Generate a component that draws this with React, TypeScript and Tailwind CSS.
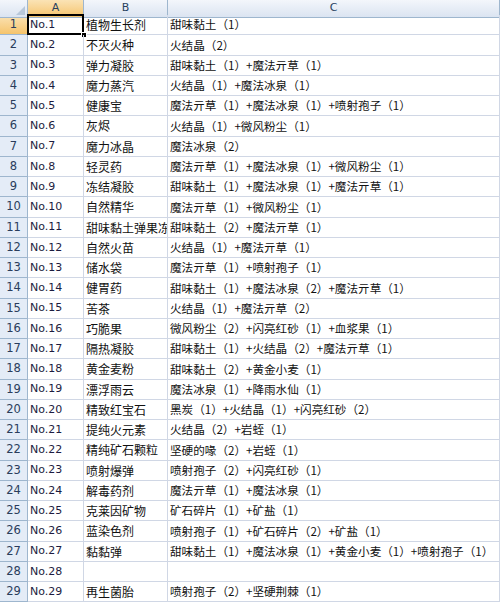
import React from 'react';

type Row = { a: string; b: string; c: string };

const rows: Row[] = [
  { a: 'No.1', b: '植物生长剂', c: '甜味黏土（1）' },
  { a: 'No.2', b: '不灭火种', c: '火结晶（2）' },
  { a: 'No.3', b: '弹力凝胶', c: '甜味黏土（1）+魔法亓草（1）' },
  { a: 'No.4', b: '魔力蒸汽', c: '火结晶（1）+魔法冰泉（1）' },
  { a: 'No.5', b: '健康宝', c: '魔法亓草（1）+魔法冰泉（1）+喷射孢子（1）' },
  { a: 'No.6', b: '灰烬', c: '火结晶（1）+微风粉尘（1）' },
  { a: 'No.7', b: '魔力冰晶', c: '魔法冰泉（2）' },
  { a: 'No.8', b: '轻灵药', c: '魔法亓草（1）+魔法冰泉（1）+微风粉尘（1）' },
  { a: 'No.9', b: '冻结凝胶', c: '甜味黏土（1）+魔法冰泉（1）+魔法亓草（1）' },
  { a: 'No.10', b: '自然精华', c: '魔法亓草（1）+微风粉尘（1）' },
  { a: 'No.11', b: '甜味黏土弹果冻', c: '甜味黏土（2）+魔法亓草（1）' },
  { a: 'No.12', b: '自然火苗', c: '火结晶（1）+魔法亓草（1）' },
  { a: 'No.13', b: '储水袋', c: '魔法亓草（1）+喷射孢子（1）' },
  { a: 'No.14', b: '健胃药', c: '甜味黏土（1）+魔法冰泉（2）+魔法亓草（1）' },
  { a: 'No.15', b: '苦茶', c: '火结晶（1）+魔法亓草（2）' },
  { a: 'No.16', b: '巧脆果', c: '微风粉尘（2）+闪亮红砂（1）+血浆果（1）' },
  { a: 'No.17', b: '隔热凝胶', c: '甜味黏土（1）+火结晶（2）+魔法亓草（1）' },
  { a: 'No.18', b: '黄金麦粉', c: '甜味黏土（2）+黄金小麦（1）' },
  { a: 'No.19', b: '漂浮雨云', c: '魔法冰泉（1）+降雨水仙（1）' },
  { a: 'No.20', b: '精致红宝石', c: '黑炭（1）+火结晶（1）+闪亮红砂（2）' },
  { a: 'No.21', b: '提纯火元素', c: '火结晶（2）+岩蛭（1）' },
  { a: 'No.22', b: '精纯矿石颗粒', c: '坚硬的喙（2）+岩蛭（1）' },
  { a: 'No.23', b: '喷射爆弹', c: '喷射孢子（2）+闪亮红砂（1）' },
  { a: 'No.24', b: '解毒药剂', c: '魔法亓草（1）+魔法冰泉（1）' },
  { a: 'No.25', b: '克莱因矿物', c: '矿石碎片（1）+矿盐（1）' },
  { a: 'No.26', b: '蓝染色剂', c: '喷射孢子（1）+矿石碎片（2）+矿盐（1）' },
  { a: 'No.27', b: '黏黏弹', c: '甜味黏土（1）+魔法冰泉（1）+黄金小麦（1）+喷射孢子（1）' },
  { a: 'No.28', b: '', c: '' },
  { a: 'No.29', b: '再生菌胎', c: '喷射孢子（2）+坚硬荆棘（1）' },
];

const cols = 'grid grid-cols-[28px_56px_84px_1fr]';
const cjk = "font-['Noto_Sans_CJK_SC',sans-serif]";
const latin = "font-['DejaVu_Sans',sans-serif]";

export default function App() {
  return (
    <div className="w-[500px] h-[604px] overflow-hidden bg-white select-none">
      {/* column headers */}
      <div className={`${cols} h-[15px] text-[11px] text-[#27415f] ${latin}`}>
        <div className="relative border-r border-b border-[#9eb6ce] bg-linear-to-b from-[#f3f6fb] to-[#dbe4f1]">
          <div className="absolute right-[2px] bottom-[2px] w-0 h-0 border-l-[9px] border-l-transparent border-b-[9px] border-b-[#b7c7da]" />
        </div>
        <div className="flex items-center justify-center border-r border-b border-[#9eb6ce] bg-linear-to-b from-[#fae3b5] to-[#f5c46b]">A</div>
        <div className="flex items-center justify-center border-r border-b border-[#9eb6ce] bg-linear-to-b from-[#f3f6fb] to-[#dbe4f1]">B</div>
        <div className="flex items-center justify-center border-r border-b border-[#9eb6ce] bg-linear-to-b from-[#f3f6fb] to-[#dbe4f1]">C</div>
      </div>

      {rows.map((r, i) => (
        <div key={r.a} className={`${cols} h-[20.25px]`}>
          <div
            className={`flex items-end justify-center pb-[1px] border-r border-b border-[#9eb6ce] text-[11.5px] text-[#2a3d5c] ${latin} ${
              i === 0 ? 'bg-linear-to-b from-[#fae3b5] to-[#f5c46b]' : 'bg-[#e4ecf7]'
            }`}
          >
            {i + 1}
          </div>
          <div className={`relative flex items-center pl-[2px] pt-[1px] border-r border-b border-[#d0d7e5] text-[11px] text-[#1c1c40] whitespace-nowrap ${latin}`}>
            {r.a}
            {i === 0 && (
              <>
                <div className="absolute -left-[1px] -top-[1px] -right-[1px] -bottom-[1px] border-2 border-black" />
                <div className="absolute -right-[4px] -bottom-[4px] w-[6px] h-[6px] bg-black border border-white" />
              </>
            )}
          </div>
          <div className={`flex items-center pl-[2px] pt-[1px] border-r border-b border-[#d0d7e5] text-[12px] text-[#111] whitespace-nowrap overflow-hidden ${cjk}`}>
            {r.b}
          </div>
          <div className={`flex items-center pl-[2px] pt-[1px] border-r border-b border-[#d0d7e5] text-[11.6px] text-[#111] whitespace-nowrap overflow-hidden ${cjk}`}>
            {r.c}
          </div>
        </div>
      ))}
    </div>
  );
}
